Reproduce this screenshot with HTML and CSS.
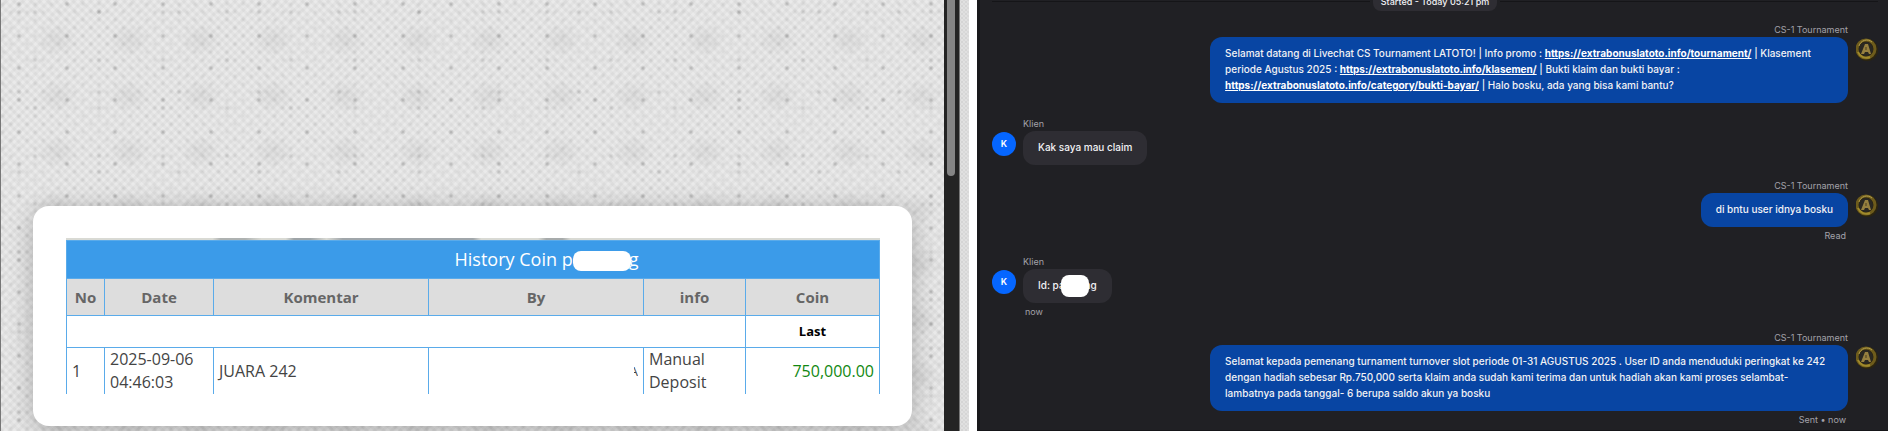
FILE: index.html
```html
<!doctype html>
<html lang="id">
  <head>
    <meta charset="UTF-8" />
    <meta
      name="viewport"
      content="width=device-width, initial-scale=1.0"
    />
    <title>History Coin</title>
    <link rel="stylesheet" href="styles.css">
  </head>
  <body>
    <svg class="symbols" aria-hidden="true">
      <symbol id="agent-logo" viewBox="0 0 22 24">
        <circle cx="11" cy="12" r="11" fill="#2c2510" />
        <circle cx="10" cy="11" r="9" fill="none" stroke="#6e5c1c" stroke-width="3" />
        <path d="M3 8a8 8 0 0 1 13-4" fill="none" stroke="#b5a04e" stroke-width="1" />
        <path d="M2 14a9 9 0 0 0 12 5" fill="none" stroke="#a08a2c" stroke-width="2" />
        <circle cx="10" cy="11" r="7" fill="#2a2822" />
        <path d="M5 16h3l1-2h3l1 2h2L12 6H9z" fill="#96803f" />
        <path d="M10 9v3" stroke="#4b3f20" stroke-width="1" />
      </symbol>
    </svg>

    <main class="page">
      <section class="history">
        <div class="card">
          <div class="table-edge"></div>
          <table class="history-table">
            <colgroup>
              <col class="col-no" />
              <col class="col-date" />
              <col class="col-comment" />
              <col class="col-by" />
              <col class="col-info" />
              <col class="col-coin" />
            </colgroup>
            <thead>
              <tr class="title-row">
                <th colspan="6">History Coin p<span class="mask mask-title"></span>g</th>
              </tr>
              <tr class="head-row">
                <th>No</th>
                <th>Date</th>
                <th>Komentar</th>
                <th>By</th>
                <th>info</th>
                <th>Coin</th>
              </tr>
            </thead>
            <tbody>
              <tr class="last-row">
                <td colspan="5"></td>
                <td>Last</td>
              </tr>
              <tr class="data-row">
                <td>1</td>
                <td>2025-09-06 04:46:03</td>
                <td>JUARA 242</td>
                <td class="by"><span class="by-name">A</span></td>
                <td>Manual Deposit</td>
                <td class="coin">750,000.00</td>
              </tr>
            </tbody>
          </table>
        </div>
      </section>

      <div class="scrollbar"><div class="scrollbar-thumb"></div></div>
      <div class="canvas-edge"></div>

      <section class="chat">
        <div class="chat-start"><span>Started - Today 05:21 pm</span></div>

        <div class="message agent">
          <div class="content">
            <div class="name">CS-1 Tournament</div>
            <div class="bubble">
              Selamat datang di Livechat CS Tournament LATOTO! | Info promo :
              <a href="https://extrabonuslatoto.info/tournament/">https://extrabonuslatoto.info/tournament/</a>
              | Klasement periode Agustus 2025 :
              <a href="https://extrabonuslatoto.info/klasemen/">https://extrabonuslatoto.info/klasemen/</a>
              | Bukti klaim dan bukti bayar :
              <a href="https://extrabonuslatoto.info/category/bukti-bayar/">https://extrabonuslatoto.info/category/bukti-bayar/</a>
              | Halo bosku, ada yang bisa kami bantu?
            </div>
          </div>
          <svg class="avatar"><use href="#agent-logo" /></svg>
        </div>

        <div class="message client">
          <div class="avatar">K</div>
          <div class="content">
            <div class="name">Klien</div>
            <div class="bubble">Kak saya mau claim</div>
          </div>
        </div>

        <div class="message agent">
          <div class="content">
            <div class="name">CS-1 Tournament</div>
            <div class="bubble">di bntu user idnya bosku</div>
            <div class="status">Read</div>
          </div>
          <svg class="avatar"><use href="#agent-logo" /></svg>
        </div>

        <div class="message client">
          <div class="avatar">K</div>
          <div class="content">
            <div class="name">Klien</div>
            <div class="bubble">Id: pa<span class="mask mask-chat"></span>ng</div>
            <div class="status">now</div>
          </div>
        </div>

        <div class="message agent">
          <div class="content">
            <div class="name">CS-1 Tournament</div>
            <div class="bubble">
              Selamat kepada pemenang turnament turnover slot periode 01-31
              AGUSTUS 2025 . User ID anda menduduki peringkat ke 242 dengan
              hadiah sebesar Rp.750,000 serta klaim anda sudah kami terima dan
              untuk hadiah akan kami proses selambat-lambatnya pada tanggal- 6
              berupa saldo akun ya bosku
            </div>
            <div class="status">Sent • now</div>
          </div>
          <svg class="avatar"><use href="#agent-logo" /></svg>
        </div>
      </section>
    </main>
  </body>
</html>
```

FILE: styles.css
```css
:root {
  --table-blue: #3b9be9;
  --line-blue: #5aabea;
  --chat-bg: #202024;
  --bubble-agent: #0845a3;
  --bubble-client: #2e2d33;
  --muted: #a3a2aa;
}

* {
  margin: 0;
  padding: 0;
  box-sizing: border-box;
}

body {
  background: #fff;
  overflow: hidden;
}

.symbols {
  display: none;
}

.page {
  display: flex;
  height: 100vh;
}

/* History panel */

.history {
  flex: 1;
  padding: 206px 32px 5px 32px;
  border-left: 1px solid #777;
  font-family: 'Open Sans', 'Noto Sans', sans-serif;
  /* woven paper: dots on a diagonal grid over crossed threads */
  background-color: #eaeaea;
  background-image:
    radial-gradient(circle, rgba(0, 0, 0, 0.16) 0, transparent 3px),
    radial-gradient(circle, rgba(0, 0, 0, 0.14) 0, transparent 3px),
    radial-gradient(circle, rgba(0, 0, 0, 0.16) 0, transparent 3px),
    radial-gradient(circle, rgba(0, 0, 0, 0.08) 0, transparent 3px),
    radial-gradient(circle, rgba(0, 0, 0, 0.08) 0, transparent 3px),
    repeating-linear-gradient(
      45deg,
      rgba(0, 0, 0, 0.03) 0 2px,
      transparent 3px 5px,
      rgba(0, 0, 0, 0.03) 6px
    ),
    repeating-linear-gradient(
      -45deg,
      rgba(0, 0, 0, 0.03) 0 2px,
      transparent 3px 5px,
      rgba(0, 0, 0, 0.03) 6px
    ),
    radial-gradient(ellipse, rgba(0, 0, 0, 0.05) 0, transparent 20px);
  background-size:
    48px 32px,
    64px 48px,
    80px 80px,
    16px 16px,
    16px 16px,
    auto,
    auto,
    72px 56px;
  background-position:
    -6px -12px,
    2px -12px,
    -22px -28px,
    -6px -4px,
    2px 4px,
    0 0,
    0 0,
    20px 12px;
}

.card {
  padding: 32px 32px 32px 33px;
  background: #fff;
  border-radius: 16px;
  box-shadow: 0 4px 24px rgba(0, 0, 0, 0.25);
}

/* sliver of the page header above the table */
.table-edge {
  height: 2px;
  background: linear-gradient(
    to right,
    #d9dad4 18%,
    #aeb2b1 19% 22%,
    #d9dad4 24% 27%,
    #9ea4a7 28% 30%,
    #d9dad4 32%,
    #a0a6aa 34% 50%,
    #d9dad4 51% 58%,
    #a7abab 59% 61%,
    #d9dad4 62%
  );
}

.history-table {
  width: 100%;
  table-layout: fixed;
  border-collapse: collapse;
  font-size: 16px;
  line-height: 23px;
  color: #444;
}

.history-table th,
.history-table td {
  padding: 0 5px;
  border: 1px solid var(--line-blue);
}

.col-no {
  width: 38px;
}

.col-date {
  width: 109px;
}

.col-comment {
  width: 215px;
}

.col-by {
  width: 215px;
}

.col-info {
  width: 102px;
}

.history-table .title-row th {
  height: 38px;
  padding-left: 152px;
  background: var(--table-blue);
  color: #fff;
  font-size: 18px;
  font-weight: 400;
}

.head-row th {
  height: 37px;
  background: #ddd;
  color: #666;
  font-size: 15px;
  font-weight: 700;
}

.last-row td {
  height: 32px;
  color: #000;
  font-size: 13px;
  font-weight: 700;
  text-align: center;
}

.history-table .data-row td {
  border-bottom: none;
}

.history-table .coin {
  color: #118811;
  text-align: right;
}

.by {
  text-align: right;
}

.by-name {
  display: inline-flex;
  justify-content: flex-end;
  width: 4px;
  overflow: hidden;
  font-size: 13px;
}

.mask {
  display: inline-block;
  background: #fff;
  position: relative;
}

.mask-title {
  width: 58px;
  height: 20px;
  margin-right: -2px;
  border-radius: 8px;
  vertical-align: middle;
}

.mask-chat {
  width: 28px;
  height: 22px;
  margin: -4px;
  border-radius: 8px;
  vertical-align: middle;
}

/* Window edge between the two panels */

.scrollbar {
  width: 16px;
  padding: 0 4px 0 3px;
  background: #242424;
  border-right: 1px solid #777;
}

.scrollbar-thumb {
  height: 176px;
  background: #858585;
  border-radius: 0 0 5px 5px;
}

.canvas-edge {
  width: 9px;
  margin-right: 8px;
  background-color: #e0e0e0;
  background-image:
    radial-gradient(circle, #bcbcbc 0, transparent 1px),
    radial-gradient(circle, #c8c8c8 0, transparent 1px);
  background-size: 4px 4px;
  background-position:
    0 0,
    2px 2px;
}

/* Live chat */

.chat {
  width: 911px;
  padding: 0 10px 0 12px;
  background: var(--chat-bg);
  border-left: 3px solid #18181b;
  border-bottom: 1px solid #151518;
  font-family: Inter, sans-serif;
  font-size: 10px;
  font-weight: 500;
  line-height: 16px;
  color: #f2f2f5;
}

.chat-start {
  display: flex;
  align-items: center;
  gap: 3px;
  margin: -8px 0 12px;
  font-size: 9px;
}

.chat-start::before,
.chat-start::after {
  content: '';
  flex: 1;
  height: 1px;
  background: #151518;
}

.chat-start span {
  padding: 2px 8px 1px;
  background: var(--bubble-client);
  border-radius: 8px;
}

.message {
  display: flex;
  margin-bottom: 14px;
}

.content {
  display: flex;
  flex-direction: column;
  align-items: flex-start;
  max-width: 72%;
}

.name,
.status {
  height: 14px;
  font-size: 9px;
  font-weight: 400;
  line-height: 14px;
  color: var(--muted);
}

.status {
  padding: 0 2px;
  line-height: 18px;
}

.bubble {
  padding: 8px 15px 10px;
  border-radius: 12px;
  background: var(--bubble-client);
}

.bubble a {
  color: #fff;
  font-weight: 700;
}

.agent {
  justify-content: flex-end;
  gap: 8px;
}

.agent .content {
  align-items: flex-end;
}

.agent .bubble {
  background: var(--bubble-agent);
}

.agent .avatar {
  width: 22px;
  height: 24px;
  margin-top: 15px;
}

.client {
  gap: 7px;
}

.client .avatar {
  width: 24px;
  height: 24px;
  margin-top: 15px;
  border-radius: 50%;
  background: #0566ff;
  color: #fff;
  font-size: 9px;
  font-weight: 600;
  line-height: 24px;
  text-align: center;
}
```
